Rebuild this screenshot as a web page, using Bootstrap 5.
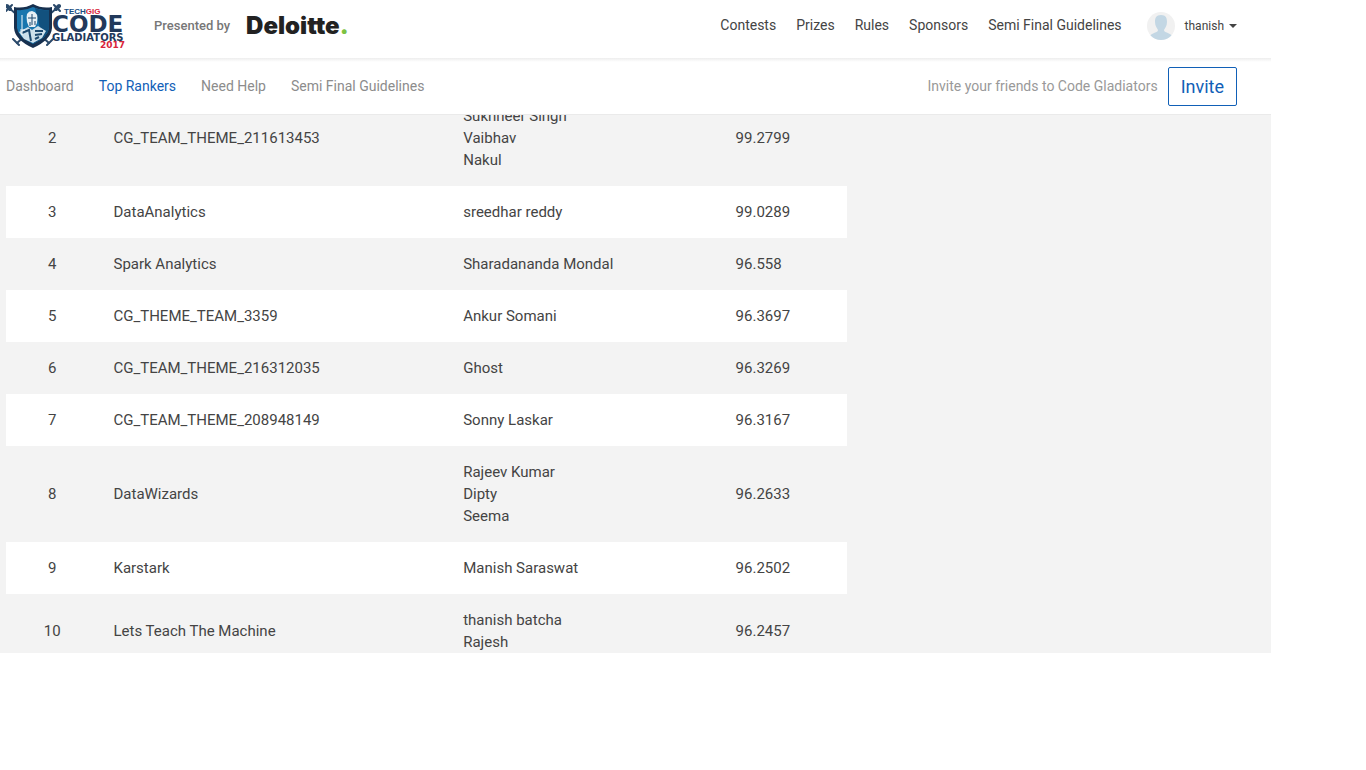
<!DOCTYPE html>
<html lang="en">
<head>
<meta charset="utf-8">
<meta name="viewport" content="width=device-width, initial-scale=1">
<title>Code Gladiators 2017 - Top Rankers</title>
<link href="https://cdn.jsdelivr.net/npm/bootstrap@5.3.0/dist/css/bootstrap.min.css" rel="stylesheet">
<style>
  body { font-family: Roboto, "Open Sans", sans-serif; font-size: 14px; color: #444; background: #fff; }
  .site-shell { margin-right: 95px; height: calc(100vh - 117px); }
  .site-header { min-height: 58px; padding: 0 34px 7px 6px; }
  .site-header .nav-link { color: #444; padding: 0; }
  .sponsor-note { font-size: 13px; font-weight: 500; color: #777; margin-left: 28px; }
  .sponsor-name { font: 900 24px/28px Inter, sans-serif; font-variant-ligatures: none; color: #222; margin-left: 16px; }
  .sponsor-name span { color: #7cc242; }
  .main-links { gap: 20px; }
  .user-avatar { margin-left: 25px; }
  .user-menu { font-size: 12px; color: #444; line-height: 18px; margin-left: 10px; }
  .user-menu::after { margin-left: 5px; vertical-align: 2px; border-top-width: 4px; border-left-width: 4px; border-right-width: 4px; }
  .sub-header { min-height: 57px; padding: 0 34px 0 6px; border-bottom: 1px solid #eaeaea; background: linear-gradient(#ededed, #fff 4px); }
  .sub-header .nav { gap: 25px; }
  .sub-header .nav-link { color: #8c8c8c; padding: 0; }
  .sub-header .nav-link.active { color: #1160b7; }
  .invite-note { color: #999; }
  .btn-invite, .btn-invite:hover { color: #1160b7; border: 1px solid #1160b7; border-radius: 2px; font-size: 18px; line-height: 25px; padding: 6px 12px; margin-left: 10px; }
  .rank-area { background: #f3f3f3; padding-left: 6px; }
  /* the list is scrolled part of the way through its second row */
  .rank-scroll { margin: -25px 4px 0 0; }
  .rank-table { table-layout: fixed; font-size: 15px; line-height: 22px; color: #444; }
  .rank-table td { padding: 15px; }
  .rank-table tr:nth-child(even) { background: #fff; }
  .col-rank { width: 11%; }
  .col-names { width: 32.4%; }
  .col-score { width: 15%; }
</style>
</head>
<body>
<div class="site-shell d-flex flex-column overflow-hidden">
  <header class="site-header d-flex align-items-center flex-shrink-0">
    <a href="#" class="d-block" aria-label="TechGig Code Gladiators 2017">
      <svg class="d-block" width="120" height="48" viewBox="6 2 120 48">
        <g stroke="#2b4a6b" stroke-width="2" fill="none" stroke-linecap="round">
          <path d="M8 7L49 43M58 7L17 43"/>
          <path d="M6 11L12 5M54 5L60 11M13 39L19 45M47 45L53 39"/>
          <path d="M7 6L10 9M59 6L56 9" stroke-width="4"/>
        </g>
        <path d="M14 7Q24 9 33 4Q42 9 52 7V28Q51 40 33 48Q15 40 14 28Z" fill="#17304f"/>
        <path d="M17 10Q25 11 33 7Q41 11 49 10V28Q48 37 33 44Q18 37 17 28Z" fill="#1976ae"/>
        <path d="M35 8Q42 11 49 10V28Q48 37 33 44L40 28Z" fill="#12517e"/>
        <path d="M27 22Q25 11 32 11Q39 12 37 23L35 27H29Z" fill="#e7f0f5"/>
        <path d="M28 18H36M32 14V25M30 22V26M35 21V25" stroke="#1d496f" stroke-width="1"/>
        <path d="M19 32L28 27L32 30L38 26L46 31L42 38L33 43L24 39Z" fill="#cde0eb"/>
        <path d="M22 33L29 30L31 41M35 31L43 31M35 35L42 34M35 39L39 37" stroke="#1d496f" stroke-width="2" fill="none"/>
        <path d="M22 15V35M20 30H25" stroke="#f5f9fb" stroke-width="1"/>
        <g font-weight="700">
          <text x="64" y="14" font-family="Liberation Sans, sans-serif" font-size="8" fill="#174d82">TECH<tspan fill="#d9263c">GIG</tspan></text>
          <text x="52" y="32" font-family="DejaVu Sans, sans-serif" font-size="23" fill="#22395b">CODE</text>
          <text x="52" y="41" font-family="DejaVu Sans, sans-serif" font-size="10" fill="#22395b">GLADIATORS</text>
          <text x="100" y="48" font-family="DejaVu Sans, sans-serif" font-size="9" fill="#d9263c">2017</text>
        </g>
      </svg>
    </a>
    <span class="sponsor-note">Presented by</span>
    <span class="sponsor-name">Deloitte<span>.</span></span>
    <nav class="ms-auto d-flex align-items-center" aria-label="Main">
      <ul class="nav main-links">
        <li><a class="nav-link" href="#">Contests</a></li>
        <li><a class="nav-link" href="#">Prizes</a></li>
        <li><a class="nav-link" href="#">Rules</a></li>
        <li><a class="nav-link" href="#">Sponsors</a></li>
        <li><a class="nav-link" href="#">Semi Final Guidelines</a></li>
      </ul>
      <svg class="user-avatar" width="28" height="28" viewBox="0 0 28 28" aria-hidden="true">
        <clipPath id="round"><circle cx="14" cy="14" r="14"/></clipPath>
        <g clip-path="url(#round)"><rect width="28" height="28" fill="#f1f1f1"/>
        <path d="M14 3C9 3 8 6 8 10C8 14 10 16 11 18C11 21 5 20 2 25V28H26V25C23 20 17 21 17 18C18 16 20 14 20 10C20 6 19 3 14 3Z" fill="#c3d7e4"/></g>
      </svg>
      <button type="button" class="user-menu dropdown-toggle border-0 bg-transparent p-0">thanish</button>
    </nav>
  </header>

  <div class="sub-header d-flex align-items-center flex-shrink-0">
    <ul class="nav">
      <li><a class="nav-link" href="#">Dashboard</a></li>
      <li><a class="nav-link active" href="#" aria-current="page">Top Rankers</a></li>
      <li><a class="nav-link" href="#">Need Help</a></li>
      <li><a class="nav-link" href="#">Semi Final Guidelines</a></li>
    </ul>
    <span class="invite-note ms-auto">Invite your friends to Code Gladiators</span>
    <button type="button" class="btn btn-invite">Invite</button>
  </div>

  <main class="rank-area flex-grow-1 overflow-hidden">
    <div class="row g-0 rank-scroll">
      <div class="col-8">
        <table class="rank-table w-100" aria-label="Top rankers">
          <colgroup><col class="col-rank"><col><col class="col-names"><col class="col-score"></colgroup>
          <tbody>
            <tr><td class="text-center">2</td><td>CG_TEAM_THEME_211613453</td><td>Sukhneer Singh<br>Vaibhav<br>Nakul</td><td>99.2799</td></tr>
            <tr><td class="text-center">3</td><td>DataAnalytics</td><td>sreedhar reddy</td><td>99.0289</td></tr>
            <tr><td class="text-center">4</td><td>Spark Analytics</td><td>Sharadananda Mondal</td><td>96.558</td></tr>
            <tr><td class="text-center">5</td><td>CG_THEME_TEAM_3359</td><td>Ankur Somani</td><td>96.3697</td></tr>
            <tr><td class="text-center">6</td><td>CG_TEAM_THEME_216312035</td><td>Ghost</td><td>96.3269</td></tr>
            <tr><td class="text-center">7</td><td>CG_TEAM_THEME_208948149</td><td>Sonny Laskar</td><td>96.3167</td></tr>
            <tr><td class="text-center">8</td><td>DataWizards</td><td>Rajeev Kumar<br>Dipty<br>Seema</td><td>96.2633</td></tr>
            <tr><td class="text-center">9</td><td>Karstark</td><td>Manish Saraswat</td><td>96.2502</td></tr>
            <tr><td class="text-center">10</td><td>Lets Teach The Machine</td><td>thanish batcha<br>Rajesh</td><td>96.2457</td></tr>
          </tbody>
        </table>
      </div>
    </div>
  </main>
</div>
<script src="https://cdn.jsdelivr.net/npm/bootstrap@5.3.0/dist/js/bootstrap.bundle.min.js"></script>
</body>
</html>
